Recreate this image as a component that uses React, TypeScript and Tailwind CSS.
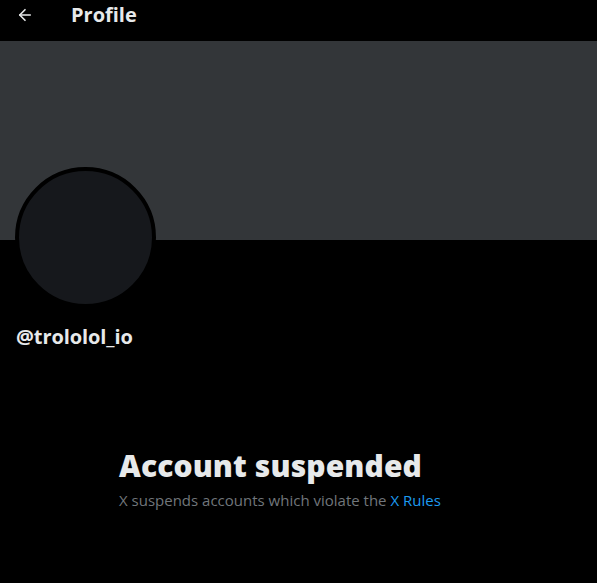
import { ArrowLeft } from 'lucide-react'

export default function App() {
  return (
    <div className="w-[597px] h-[583px] bg-black text-[#e7e9ea] overflow-hidden" style={{ fontFamily: '"Open Sans", "Liberation Sans", sans-serif' }}>
      {/* Top bar */}
      <header className="h-[41px] flex items-start pt-[4px]">
        <div className="w-[51px] h-[22px] flex items-center pl-[16px]">
          <ArrowLeft size={18} strokeWidth={2.2} className="text-[#e7e9ea]" />
        </div>
        <h1 className="ml-[20px] -mt-[1px] text-[20px] font-bold leading-[24px]">Profile</h1>
      </header>

      {/* Banner */}
      <div className="h-[199px] bg-[#333639]" />

      {/* Avatar + handle */}
      <div className="px-[15px]">
        <div className="-mt-[73px] w-[141px] h-[141px] rounded-full border-[4px] border-black bg-[#16181c]" />
        <div className="mt-[17px] ml-[1px] text-[20px] font-bold leading-[24px] tracking-[-0.1px]">@trololol_io</div>
      </div>

      {/* Empty state */}
      <div className="pl-[119px] mt-[99px]">
        <h2 className="text-[30px] font-extrabold leading-[36px] tracking-[0.1px]">Account suspended</h2>
        <p className="mt-[6px] text-[15px] leading-[20px] text-[#71767b]">
          X suspends accounts which violate the <span className="text-[#1d9bf0]">X Rules</span>
        </p>
      </div>
    </div>
  )
}
